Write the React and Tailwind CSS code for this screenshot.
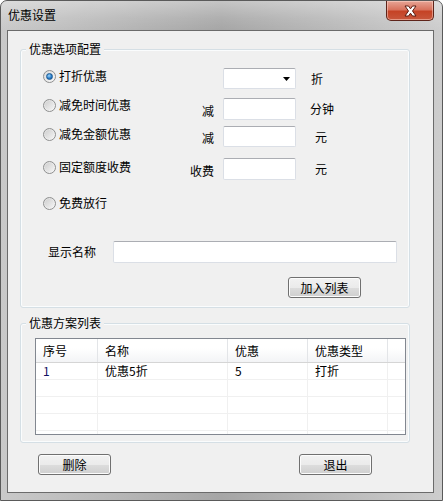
import React from "react";

const font = { fontFamily: '"Noto Sans CJK SC", "Liberation Sans", sans-serif' };

const Radio = ({ checked }) => (
  <div className="w-[13px] h-[13px] rounded-full border border-[#8e8f8f] bg-gradient-to-br from-[#dcdcdc] to-[#f8f8f8] flex items-center justify-center">
    {checked ? (
      <div className="w-[7px] h-[7px] rounded-full bg-[radial-gradient(circle_at_40%_35%,#9fd6fb,#2a7ec9_55%,#0d4f94)] border border-[#1d5b94]" />
    ) : (
      <div className="w-[9px] h-[9px] rounded-full bg-gradient-to-br from-[#cfcfcf] to-[#f4f4f4]" />
    )}
  </div>
);

const WinButton = ({ children, className = "" }) => (
  <div
    className={`w-[73px] h-[21px] rounded-[3px] border border-[#707070] flex items-center justify-center text-[12px] text-black bg-[linear-gradient(#f2f2f2_0%,#ebebeb_50%,#dddddd_51%,#cfcfcf_100%)] shadow-[inset_0_0_0_1px_#fcfcfc] ${className}`}
  >
    {children}
  </div>
);

const TextBox = ({ className = "" }) => (
  <div className={`bg-white border border-[#dbdfe6] border-t-[#abadb3] rounded-[2px] ${className}`} />
);

const GroupBox = ({ title, className = "", children }) => (
  <div className={`relative border border-[#d5dfe5] rounded-[3px] shadow-[inset_0_0_0_1px_#fafcfd] ${className}`}>
    <div className="absolute left-[5px] top-[-10px] px-[3px] bg-[#f0f0f0] text-[12px] leading-[18px] text-black">
      {title}
    </div>
    {children}
  </div>
);

const radios = [
  { label: "打折优惠", checked: true, mt: "mt-[16px]" },
  { label: "减免时间优惠", mt: "mt-[9px]" },
  { label: "减免金额优惠", mt: "mt-[9px]" },
  { label: "固定额度收费", mt: "mt-[13px]" },
  { label: "免费放行", mt: "mt-[16px]" },
];

const cols = [
  { w: "w-[62px]", label: "序号" },
  { w: "w-[130px]", label: "名称" },
  { w: "w-[80px]", label: "优惠" },
  { w: "w-[80px]", label: "优惠类型" },
  { w: "flex-1", label: "" },
];

const rows = [["1", "优惠5折", "5", "打折"], [], [], [], []];

export default function App() {
  return (
    <div
      style={font}
      className="w-[443px] h-[501px] flex flex-col rounded-t-[7px] border border-[#5a5a5a] bg-[linear-gradient(90deg,#c9c9c9_0%,#b4b4b4_30%,#a6a6a6_50%,#b9b9b9_75%,#cdcdcd_100%)] overflow-hidden"
    >
      {/* title bar */}
      <div className="h-[29px] flex items-start justify-between shrink-0 bg-[linear-gradient(180deg,rgba(255,255,255,0.35)_0%,rgba(255,255,255,0.1)_60%,rgba(255,255,255,0)_100%)]">
        <div className="pl-[7px] pt-[6px] text-[12px] leading-[16px] text-black">优惠设置</div>
        <div className="mr-[8px] w-[48px] h-[20px] rounded-b-[5px] border border-t-0 border-[#5e241a] bg-[linear-gradient(180deg,#e7a596_0%,#d8735e_45%,#c54326_55%,#c8573c_100%)] shadow-[inset_0_0_0_1px_rgba(255,220,210,0.5)] flex items-center justify-center">
          <svg width="15" height="12" viewBox="0 0 15 12">
            <path
              d="M2 1 L5.5 1 L7.5 3.8 L9.5 1 L13 1 L9.5 6 L13 11 L9.5 11 L7.5 8.2 L5.5 11 L2 11 L5.5 6 Z"
              fill="#ffffff"
              stroke="#5a1c12"
              strokeWidth="1"
              strokeLinejoin="round"
            />
          </svg>
        </div>
      </div>

      {/* client area */}
      <div className="ml-[6px] w-[427px] h-[463px] border border-[#6b6b6b] bg-[#f0f0f0] flex flex-col">
        <GroupBox title="优惠选项配置" className="ml-[12px] mt-[18px] w-[390px] h-[259px] shrink-0">
          <div className="flex">
            {/* radios */}
            <div className="w-[153px] pl-[22px] flex flex-col">
              {radios.map((r) => (
                <div key={r.label} className={`h-[20px] flex items-center gap-[3px] ${r.mt}`}>
                  <Radio checked={r.checked} />
                  <span className="text-[12px] text-black leading-none">{r.label}</span>
                </div>
              ))}
            </div>
            {/* fields */}
            <div className="flex flex-col text-[12px] text-black">
              <div className="mt-[18px] flex items-center h-[21px]">
                <div className="w-[49px]" />
                <div className="w-[73px] h-[21px] bg-white border border-[#dbdfe6] border-t-[#abadb3] rounded-[2px] flex items-center justify-end pr-[5px]">
                  <svg width="7" height="4" viewBox="0 0 7 4">
                    <path d="M0 0 H7 L3.5 4 Z" fill="#000" />
                  </svg>
                </div>
                <span className="ml-[15px]">折</span>
              </div>
              <div className="mt-[9px] flex items-center h-[22px]">
                <div className="w-[40px] text-right pt-[4px]">减</div>
                <TextBox className="ml-[9px] w-[73px] h-[22px]" />
                <span className="ml-[14px]">分钟</span>
              </div>
              <div className="mt-[6px] flex items-center h-[21px]">
                <div className="w-[40px] text-right pt-[3px]">减</div>
                <TextBox className="ml-[9px] w-[73px] h-[21px]" />
                <span className="ml-[19px]">元</span>
              </div>
              <div className="mt-[11px] flex items-center h-[22px]">
                <div className="w-[40px] text-right pt-[4px]">收费</div>
                <TextBox className="ml-[9px] w-[73px] h-[22px]" />
                <span className="ml-[19px]">元</span>
              </div>
            </div>
          </div>

          <div className="mt-[28px] flex items-center pl-[27px] text-[12px] text-black">
            <span className="w-[65px]">显示名称</span>
            <TextBox className="w-[284px] h-[22px]" />
          </div>
          <div className="mt-[14px] flex justify-end pr-[48px]">
            <WinButton>加入列表</WinButton>
          </div>
        </GroupBox>

        <GroupBox title="优惠方案列表" className="ml-[12px] mt-[15px] w-[390px] h-[120px] shrink-0">
          <div className="ml-[14px] mt-[14px] w-[371px] h-[97px] border border-[#828790] bg-white overflow-hidden flex flex-col text-[12px] text-black">
            <div className="h-[24px] flex shrink-0 border-b border-[#d5d5d5] bg-[linear-gradient(180deg,#ffffff_0%,#ffffff_40%,#f3f4f6_100%)]">
              {cols.map((c, i) => (
                <div
                  key={i}
                  className={`${c.w} h-full flex items-center pl-[7px] ${i < 4 ? "border-r border-[#e3e5e8]" : ""}`}
                >
                  {c.label}
                </div>
              ))}
            </div>
            {rows.map((r, ri) => (
              <div key={ri} className="h-[17px] flex shrink-0 border-b border-[#f0f0f0]">
                {cols.map((c, i) => (
                  <div
                    key={i}
                    className={`${c.w} h-full flex items-center pl-[7px] leading-none ${i < 4 ? "border-r border-[#f0f0f0]" : ""} ${i === 0 ? "text-[#101060]" : ""}`}
                  >
                    {r[i] || ""}
                  </div>
                ))}
              </div>
            ))}
          </div>
        </GroupBox>

        <div className="mt-[11px] flex justify-between pl-[30px] pr-[61px]">
          <WinButton>删除</WinButton>
          <WinButton>退出</WinButton>
        </div>
      </div>
    </div>
  );
}
